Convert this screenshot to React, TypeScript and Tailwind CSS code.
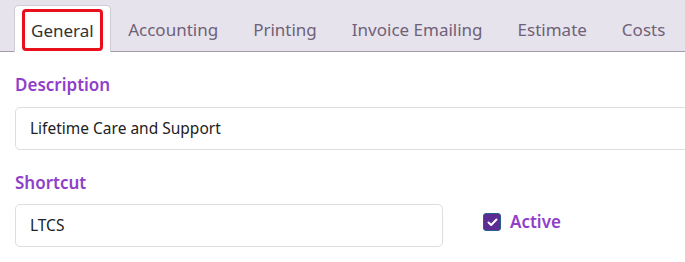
export default function App() {
  const tabs = ["General", "Accounting", "Printing", "Invoice Emailing", "Estimate", "Costs"]

  return (
    <div className="w-[685px] h-[262px] overflow-hidden bg-white" style={{ fontFamily: '"Noto Sans", sans-serif' }}>
      {/* Tab bar */}
      <div className="h-[52px] bg-[#e7e3ec] border-b border-[#a49aab] flex items-end pl-[14px] whitespace-nowrap">
        {tabs.map((t, i) =>
          i === 0 ? (
            <div
              key={t}
              className="shrink-0 h-[47px] -mb-px bg-white border border-b-0 border-[#cfcad4] rounded-t-[5px] px-[7px] pt-[3px] flex"
            >
              <div className="border-[3px] border-[#e8101c] rounded-[4px] px-[6px] pt-[2px] flex items-center h-[42px] text-[17px] text-[#333]">
                {t}
              </div>
            </div>
          ) : (
            <div key={t} className="shrink-0 h-[47px] px-[17.5px] flex items-center pt-[5px] text-[17px] text-[#6e6178]">
              {t}
            </div>
          )
        )}
      </div>

      {/* Form */}
      <div className="pl-[15px] pt-[21px]">
        <div className="text-[17px] font-semibold text-[#8f3fc9] leading-[24px]">Description</div>
        <div className="mt-[10px] h-[43px] w-[700px] border border-[#dedede] rounded-[5px] flex items-center pl-[14px] text-[15.5px] text-[#222]">
          Lifetime Care and Support
        </div>

        <div className="mt-[21px] text-[17px] font-semibold text-[#8f3fc9] leading-[24px]">Shortcut</div>
        <div className="mt-[9px] flex items-center">
          <div className="h-[43px] w-[428px] border border-[#dedede] rounded-[5px] flex items-center pl-[14px] text-[15.5px] text-[#222]">
            LTCS
          </div>
          <div className="ml-[40px] flex items-center gap-[9px] -mt-[7px]">
            <div className="w-[18px] h-[18px] rounded-[3px] bg-[#5c2c93] border border-[#2a5f8f] flex items-center justify-center">
              <svg width="11" height="9" viewBox="0 0 11 9" fill="none">
                <path d="M1.5 4.5 L4.2 7 L9.5 1.5" stroke="white" strokeWidth="2" strokeLinecap="round" strokeLinejoin="round" />
              </svg>
            </div>
            <span className="text-[17px] font-semibold text-[#8f3fc9]">Active</span>
          </div>
        </div>
      </div>
    </div>
  )
}
